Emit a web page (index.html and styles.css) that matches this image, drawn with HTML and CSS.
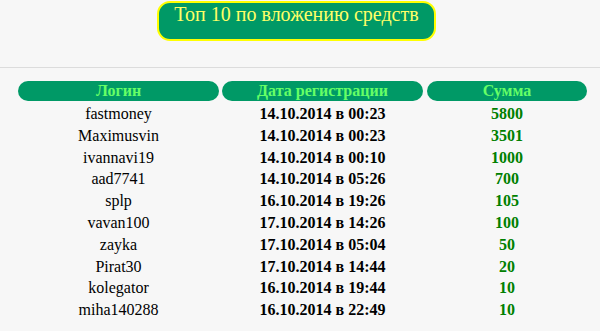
FILE: index.html
```html
<!DOCTYPE html>
<html lang="ru">
<head>
<meta charset="utf-8">
<title>Топ 10</title>
<link rel="stylesheet" href="styles.css">
</head>
<body>
<div class="top">
  <div class="title">Топ 10 по вложению средств</div>
</div>
<div class="table">
  <div class="th">Логин</div>
  <div class="th">Дата регистрации</div>
  <div class="th th-sum">Сумма</div>

  <div class="td">fastmoney</div><div class="td date">14.10.2014 в 00:23</div><div class="td sum">5800</div>
  <div class="td">Maximusvin</div><div class="td date">14.10.2014 в 00:23</div><div class="td sum">3501</div>
  <div class="td">ivannavi19</div><div class="td date">14.10.2014 в 00:10</div><div class="td sum">1000</div>
  <div class="td">aad7741</div><div class="td date">14.10.2014 в 05:26</div><div class="td sum">700</div>
  <div class="td">splp</div><div class="td date">16.10.2014 в 19:26</div><div class="td sum">105</div>
  <div class="td">vavan100</div><div class="td date">17.10.2014 в 14:26</div><div class="td sum">100</div>
  <div class="td">zayka</div><div class="td date">17.10.2014 в 05:04</div><div class="td sum">50</div>
  <div class="td">Pirat30</div><div class="td date">17.10.2014 в 14:44</div><div class="td sum">20</div>
  <div class="td">kolegator</div><div class="td date">16.10.2014 в 19:44</div><div class="td sum">10</div>
  <div class="td">miha140288</div><div class="td date">16.10.2014 в 22:49</div><div class="td sum">10</div>
</div>
</body>
</html>
```

FILE: styles.css
```css
html, body {
  margin: 0;
  padding: 0;
  background: #f7f7f7;
  color: #000;
  font-family: "Liberation Serif", "Times New Roman", serif;
}
.top {
  display: flex;
  justify-content: center;
  padding: 1px 0 0 0;
  height: 68px;
  box-sizing: border-box;
  border-bottom: 1px solid #dcdcdc;
}
.title {
  width: 279px;
  height: 40px;
  box-sizing: border-box;
  margin-left: -7px;
  background: #009966;
  border: 2px solid #ffff00;
  border-radius: 13px;
  color: #ffff66;
  font-size: 20px;
  line-height: 22px;
  text-align: center;
  padding-top: 0;
}
.table {
  display: grid;
  grid-template-columns: 201px 201px 161px;
  column-gap: 3px;
  grid-template-rows: 22px;
  grid-auto-rows: 21.8px;
  margin: 13px 0 0 18px;
  font-size: 16px;
}
.th {
  height: 20px;
  background: #009966;
  color: #66ff66;
  font-weight: bold;
  border-radius: 10px;
  text-align: center;
  line-height: 20px;
  font-size: 16px;
}
.th-sum {
  margin-left: 1px;
}
.td {
  text-align: center;
  line-height: 21.8px;
}
.date {
  font-weight: bold;
}
.sum {
  font-weight: bold;
  color: #008000;
  margin-left: 1px;
}
```
